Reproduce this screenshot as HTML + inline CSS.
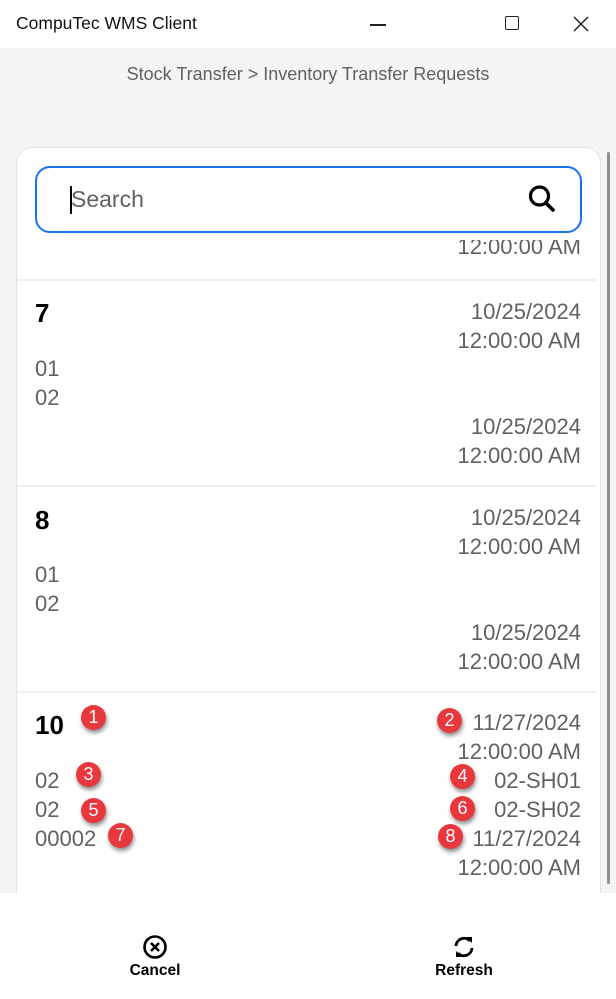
<!DOCTYPE html>
<html><head><style>
*{margin:0;padding:0;box-sizing:border-box}
body{width:616px;height:999px;position:relative;overflow:hidden;background:#f3f4f3;font-family:"Liberation Sans",sans-serif}
.a{position:absolute;white-space:nowrap}
.v{font-size:22px;color:#5f6166;line-height:29px;height:29px}
.r{right:35px;text-align:right}
.l{left:35px}
.n{font-size:26px;font-weight:bold;color:#000;left:35px;line-height:30px}
.b{position:absolute;width:25px;height:25px;border-radius:50%;background:#e8383d;color:#fff;font-size:18px;line-height:25px;text-align:center;box-shadow:1px 3px 4px rgba(0,0,0,.45)}
.sep{position:absolute;left:17px;width:580px;height:2px;background:#efefef}
</style></head><body>
<div class="a" style="left:0;top:0;width:616px;height:48px;background:#fff"></div>
<div class="a" style="left:16px;top:13px;font-size:17.5px;color:#111">CompuTec WMS Client</div>
<div class="a" style="left:370px;top:24px;width:16px;height:1.5px;background:#222"></div>
<div class="a" style="left:505px;top:16px;width:14px;height:14px;border:1.5px solid #222;border-radius:2px"></div>
<svg class="a" style="left:572px;top:15px" width="18" height="18"><path d="M2 2L16 16M16 2L2 16" stroke="#222" stroke-width="1.5"/></svg>
<div class="a" style="left:0;width:616px;top:64px;text-align:center;font-size:18px;color:#5f6166">Stock Transfer &gt; Inventory Transfer Requests</div>
<div class="a" style="left:16px;top:147px;width:585px;height:760px;background:#fff;border:1.5px solid #e4e4e4;border-radius:16px"></div>
<div class="a" style="left:607px;top:152px;width:3px;height:732px;background:#8f8f8f;border-radius:2px"></div>
<div class="a v r" style="top:232px;clip-path:inset(8px 0 0 0)">12:00:00 AM</div>
<div class="a" style="left:35px;top:166px;width:547px;height:67px;border:2px solid #1a73e8;border-radius:15px;background:#fff"></div>
<div class="a" style="left:70px;top:186px;width:2px;height:28px;background:#000"></div>
<div class="a" style="left:71px;top:186px;font-size:23px;color:#5f6166">Search</div>
<svg class="a" style="left:527px;top:183px" width="30" height="32"><circle cx="12.5" cy="13" r="9" fill="none" stroke="#000" stroke-width="3.2"/><path d="M19 20L26 27" stroke="#000" stroke-width="3.6" stroke-linecap="round"/></svg>
<div class="sep" style="top:279px"></div>
<div class="a n" style="top:298px">7</div>
<div class="a v r" style="top:297px">10/25/2024</div>
<div class="a v r" style="top:326px">12:00:00 AM</div>
<div class="a v l" style="top:354px">01</div>
<div class="a v l" style="top:383px">02</div>
<div class="a v r" style="top:412px">10/25/2024</div>
<div class="a v r" style="top:441px">12:00:00 AM</div>
<div class="sep" style="top:485px"></div>
<div class="a n" style="top:505px">8</div>
<div class="a v r" style="top:503px">10/25/2024</div>
<div class="a v r" style="top:532px">12:00:00 AM</div>
<div class="a v l" style="top:560px">01</div>
<div class="a v l" style="top:589px">02</div>
<div class="a v r" style="top:618px">10/25/2024</div>
<div class="a v r" style="top:647px">12:00:00 AM</div>
<div class="sep" style="top:691px"></div>
<div class="a n" style="top:710px">10</div>
<div class="a v r" style="top:708px">11/27/2024</div>
<div class="a v r" style="top:737px">12:00:00 AM</div>
<div class="a v l" style="top:766px">02</div>
<div class="a v r" style="top:766px">02-SH01</div>
<div class="a v l" style="top:795px">02</div>
<div class="a v r" style="top:795px">02-SH02</div>
<div class="a v l" style="top:824px">00002</div>
<div class="a v r" style="top:824px">11/27/2024</div>
<div class="a v r" style="top:853px">12:00:00 AM</div>
<div class="b" style="left:81px;top:705px">1</div>
<div class="b" style="left:437px;top:708px">2</div>
<div class="b" style="left:76px;top:762px">3</div>
<div class="b" style="left:450px;top:764px">4</div>
<div class="b" style="left:81px;top:798px">5</div>
<div class="b" style="left:450px;top:796px">6</div>
<div class="b" style="left:108px;top:823px">7</div>
<div class="b" style="left:438px;top:824px">8</div>
<div class="a" style="left:0;top:893px;width:616px;height:106px;background:#fff"></div>
<svg class="a" style="left:142px;top:934px" width="26" height="26"><circle cx="13" cy="13" r="10.5" fill="none" stroke="#000" stroke-width="2.6"/><path d="M9 9L17 17M17 9L9 17" stroke="#000" stroke-width="2.6"/></svg>
<div class="a" style="left:105px;width:100px;text-align:center;top:962px;font-size:15.5px;font-weight:bold;color:#000">Cancel</div>
<svg class="a" style="left:451px;top:934px" width="26" height="26"><path d="M5 12A8 8 0 0 1 19 7" fill="none" stroke="#000" stroke-width="2.8"/><path d="M21 14A8 8 0 0 1 7 19" fill="none" stroke="#000" stroke-width="2.8"/><path d="M15 3L21 3L21 9Z" fill="#000"/><path d="M11 23L5 23L5 17Z" fill="#000"/></svg>
<div class="a" style="left:414px;width:100px;text-align:center;top:962px;font-size:15.5px;font-weight:bold;color:#000">Refresh</div>
</body></html>
